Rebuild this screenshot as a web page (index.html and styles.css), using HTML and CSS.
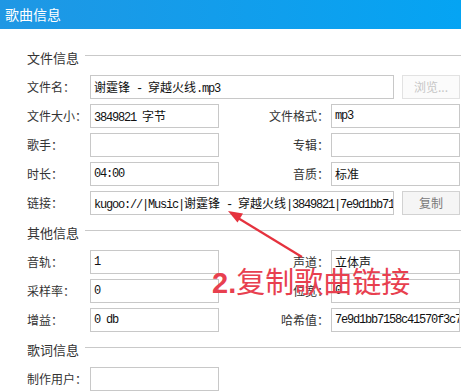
FILE: index.html
```html
<!DOCTYPE html>
<html lang="zh-CN">
<head>
    <meta charset="UTF-8">
    <title>歌曲信息</title>
    <link rel="stylesheet" href="styles.css">
</head>
<body>
    <!-- Window title -->
    <div class="titlebar">歌曲信息</div>

    <div class="content">
        <!-- File info -->
        <div class="section">
            <div class="sec-head"><span>文件信息</span><i class="rule"></i></div>
            <div class="grid">
                <div class="lbl">文件名<span class="colon">：</span></div>
                <div class="field wide"><span class="cn">谢霆锋</span> - <span class="cn">穿越火线</span>.mp3</div>
                <div class="btn disabled">浏览...</div>

                <div class="lbl">文件大小<span class="colon">：</span></div>
                <div class="field">3849821 <span class="cn">字节</span></div>
                <div class="lbl right">文件格式<span class="colon">：</span></div>
                <div class="field half">mp3</div>

                <div class="lbl">歌手<span class="colon">：</span></div>
                <div class="field"></div>
                <div class="lbl right">专辑<span class="colon">：</span></div>
                <div class="field half"></div>

                <div class="lbl">时长<span class="colon">：</span></div>
                <div class="field">04:00</div>
                <div class="lbl right">音质<span class="colon">：</span></div>
                <div class="field half"><span class="cn">标准</span></div>

                <div class="lbl">链接<span class="colon">：</span></div>
                <div class="field wide">kugoo://|Music|<span class="cn">谢霆锋</span> - <span class="cn">穿越火线</span>|3849821|7e9d1bb7158c41570f3c</div>
                <div class="btn">复制</div>
            </div>
        </div>

        <!-- Other info -->
        <div class="section">
            <div class="sec-head"><span>其他信息</span><i class="rule"></i></div>
            <div class="grid">
                <div class="lbl">音轨<span class="colon">：</span></div>
                <div class="field">1</div>
                <div class="lbl right">声道<span class="colon">：</span></div>
                <div class="field half"><span class="cn">立体声</span></div>

                <div class="lbl">采样率<span class="colon">：</span></div>
                <div class="field">0</div>
                <div class="lbl right">位宽<span class="colon">：</span></div>
                <div class="field half">0</div>

                <div class="lbl">增益<span class="colon">：</span></div>
                <div class="field">0 db</div>
                <div class="lbl right">哈希值<span class="colon">：</span></div>
                <div class="field half">7e9d1bb7158c41570f3c7a2be4d1</div>
            </div>
        </div>

        <!-- Lyrics info -->
        <div class="section">
            <div class="sec-head"><span>歌词信息</span><i class="rule"></i></div>
            <div class="grid">
                <div class="lbl">制作用户<span class="colon">：</span></div>
                <div class="field"></div>
            </div>
        </div>
    </div>

    <!-- Red annotation over the dialog -->
    <svg class="arrow" width="461" height="391" viewBox="0 0 461 391">
        <line x1="302" y1="257" x2="238" y2="218" stroke="#e5323e" stroke-width="2.2"/>
        <polygon points="228,211 243,213.5 237.5,222.5" fill="#e5323e"/>
    </svg>
    <div class="note"><b>2.</b>复制歌曲链接</div>
</body>
</html>
```

FILE: styles.css
```css
body {
    margin: 0;
    width: 461px;
    height: 391px;
    overflow: hidden;
    background: #fff;
    font-family: "Noto Sans CJK SC", "Noto Sans", sans-serif;
    font-size: 12px;
    color: #333;
    position: relative;
}
.titlebar {
    height: 29px;
    line-height: 28px;
    padding-left: 5px;
    font-size: 14px;
    color: #fff;
    background: linear-gradient(to right, #1f97e4, #05a4f3);
}
.content {
    padding: 11px 0 0 27px;
}
.section {
    margin-top: 7px;
}
.sec-head {
    display: flex;
    align-items: center;
    height: 20px;
    margin-bottom: 8px;
    font-size: 13px;
}
.sec-head .rule {
    flex: 1;
    height: 1px;
    margin: -3px 0 0 6px;
    background: #c9c9c9;
}
.grid {
    display: grid;
    grid-template-columns: 63px 129px 112px 63px 8px 58px;
    grid-auto-rows: 24px;
    row-gap: 5px;
}
.lbl {
    line-height: 24px;
    white-space: nowrap;
}
.lbl .colon {
    font-family: "Noto Sans CJK TC", sans-serif;
}
.lbl.right {
    text-align: right;
    padding-right: 2px;
}
.field {
    box-sizing: border-box;
    border: 1px solid #c8c8c8;
    padding-left: 3px;
    line-height: 22px;
    white-space: nowrap;
    overflow: hidden;
    font-family: "Liberation Mono", "Noto Sans CJK SC", monospace;
    font-size: 12px;
    letter-spacing: -1.2px;
    color: #111;
}
.field .cn {
    font-family: "Noto Sans CJK SC", sans-serif;
    letter-spacing: 0;
}
.field.wide {
    grid-column: 2 / 5;
}
.field.half {
    grid-column: 4 / 7;
}
.btn {
    grid-column: 6;
    box-sizing: border-box;
    border: 1px solid #d2d2d2;
    background: #f5f5f5;
    color: #7a7a7a;
    text-align: center;
    line-height: 22px;
}
.btn.disabled {
    border-color: #e2e2e2;
    background: #fbfbfb;
    color: #c6c6c6;
}
.arrow {
    position: absolute;
    left: 0;
    top: 0;
    pointer-events: none;
}
.note {
    position: absolute;
    left: 212px;
    top: 265px;
    font-size: 29px;
    line-height: 30px;
    color: #e8404f;
    white-space: nowrap;
}
.note b {
    font-family: "Liberation Sans", sans-serif;
    font-weight: bold;
}
```
